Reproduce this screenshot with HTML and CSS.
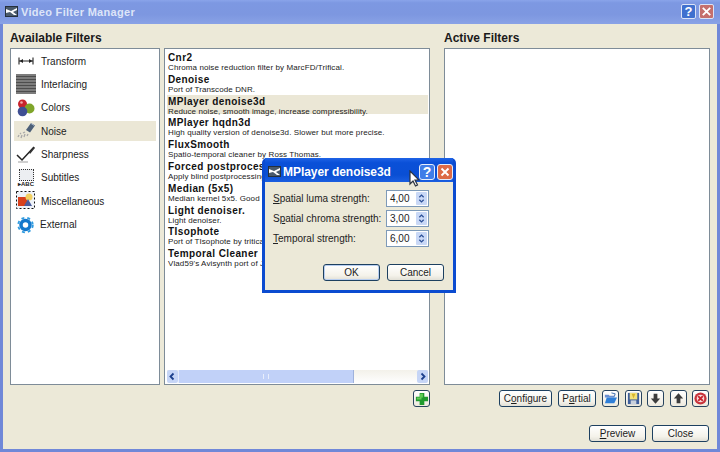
FILE: index.html
```html
<!DOCTYPE html>
<html lang="en">
<head>
<meta charset="utf-8">
<title>Video Filter Manager</title>
<link rel="stylesheet" href="styles.css">
</head>
<body>
<svg class="defs" width="0" height="0">
  <symbol id="app" viewBox="0 0 13 11">
    <rect width="13" height="11" fill="#26303c"/>
    <rect x="1" y="1" width="11" height="9" fill="#4a5a6c"/>
    <path d="M1 3l5 2 6-3v2L8 6l4 3H9L5 6 1 7z" fill="#fff"/>
  </symbol>
</svg>
<div class="window">
  <header class="titlebar">
    <svg class="app-icon"><use href="#app"/></svg>
    <span class="title">Video Filter Manager</span>
    <span class="cap cap-help">?</span>
    <span class="cap cap-close">
      <svg viewBox="0 0 14 14"><path d="M3 3l8 8M11 3l-8 8" stroke="#fff" stroke-width="2" fill="none"/></svg>
    </span>
  </header>
  <main class="panes">
    <section class="available">
      <h2 class="heading">Available Filters</h2>
      <div class="lists">
        <ul class="box cats">
          <li class="cat">
            <svg class="cat-icon" viewBox="0 0 20 20"><path d="M3 6.500v7M17 6.500v7M3 10h14" stroke="#222" stroke-width="1.100" fill="none"/><path d="M3.500 10l3.500-2v4zM16.500 10l-3.500-2v4z" fill="#222"/></svg>
            <span>Transform</span>
          </li>
          <li class="cat">
            <svg class="cat-icon" viewBox="0 0 20 20"><rect width="20" height="20" fill="#7c7c7c"/><path d="M0 2.500h20M0 5.500h20M0 8.500h20M0 11.500h20M0 14.500h20M0 17.500h20" stroke="#4d4d4d" stroke-width="1.200"/></svg>
            <span>Interlacing</span>
          </li>
          <li class="cat">
            <svg class="cat-icon" viewBox="0 0 20 20"><circle cx="6.500" cy="6" r="4.500" fill="#c8242c"/><circle cx="13.500" cy="10.500" r="5" fill="#7fa52a"/><circle cx="6.500" cy="13.500" r="4.800" fill="#3f4f93"/><circle cx="5.500" cy="4.500" r="1.300" fill="#f0a8a8"/></svg>
            <span>Colors</span>
          </li>
          <li class="cat is-selected">
            <svg class="cat-icon" viewBox="0 0 20 20"><path d="M10 9l5-7 4 2.500-5 7z" fill="#4c5f78"/><path d="M15 2.500l3 2" stroke="#9fb0c6"/><path d="M2 16l1-2M5 17l1-3M8 16l1-3M11 15l1-2M4 13l1-1M7 12l2-1" stroke="#a8a8a8" stroke-width="1.300"/></svg>
            <span>Noise</span>
          </li>
          <li class="cat">
            <svg class="cat-icon" viewBox="0 0 20 20"><path d="M1 10l5 5L18 2" stroke="#222" stroke-width="1.500" fill="none"/><path d="M13 7l5-5 1 1-5 6z" fill="#333"/><path d="M2 17h10" stroke="#cfcfcf" stroke-width="2"/></svg>
            <span>Sharpness</span>
          </li>
          <li class="cat">
            <span class="sub-icon"><span class="sub-box"></span><span class="sub-abc">▸ABC</span></span>
            <span>Subtitles</span>
          </li>
          <li class="cat">
            <svg class="cat-icon" viewBox="0 0 20 20"><rect x=".5" y=".5" width="18" height="17" fill="#eef2f8" stroke="#111" stroke-dasharray="2 2"/><rect x="2" y="6" width="9" height="9" fill="#d8401c"/><circle cx="13" cy="6" r="3.500" fill="#f2d060"/><path d="M8 15l4-7 4 7z" fill="#4a5c9c"/></svg>
            <span>Miscellaneous</span>
          </li>
          <li class="cat cat-external">
            <svg class="cat-icon" viewBox="0 0 20 20"><circle cx="9.500" cy="10" r="4.500" fill="none" stroke="#1478cc" stroke-width="3.500"/><circle cx="9.500" cy="10" r="7.300" fill="none" stroke="#2f9be0" stroke-width="1.800" stroke-dasharray="3 3"/></svg>
            <span>External</span>
          </li>
        </ul>
        <div class="box filters">
          <ul class="filter-rows">
            <li class="filter"><b>Cnr2</b><small>Chroma noise reduction filter by MarcFD/Trifical.</small></li>
            <li class="filter"><b>Denoise</b><small>Port of Transcode DNR.</small></li>
            <li class="filter is-selected"><b>MPlayer denoise3d</b><small>Reduce noise, smooth image, increase compressibility.</small></li>
            <li class="filter"><b>MPlayer hqdn3d</b><small>High quality version of denoise3d. Slower but more precise.</small></li>
            <li class="filter"><b>FluxSmooth</b><small>Spatio-temporal cleaner by Ross Thomas.</small></li>
            <li class="filter"><b>Forced postprocessing</b><small>Apply blind postprocessing</small></li>
            <li class="filter"><b>Median (5x5)</b><small>Median kernel 5x5. Good</small></li>
            <li class="filter"><b>Light denoiser.</b><small>Light denoiser.</small></li>
            <li class="filter"><b>TIsophote</b><small>Port of TIsophote by tritical</small></li>
            <li class="filter"><b>Temporal Cleaner</b><small>Vlad59's Avisynth port of J</small></li>
          </ul>
          <div class="hscroll">
            <span class="sb-btn"><svg viewBox="0 0 11 13"><path d="M6.500 3.500l-3 3 3 3" stroke="#1c3f8c" stroke-width="1.800" fill="none"/></svg></span>
            <span class="sb-thumb"><span class="sb-grip"></span></span>
            <span class="sb-track"></span>
            <span class="sb-btn"><svg viewBox="0 0 11 13"><path d="M4.500 3.500l3 3-3 3" stroke="#1c3f8c" stroke-width="1.800" fill="none"/></svg></span>
          </div>
        </div>
      </div>
      <div class="tools tools-add">
        <span class="tool"><svg viewBox="0 0 16 16"><path d="M6 2h5v4h4v5h-4v4H6v-4H2V6h4z" fill="#1f9a2e"/><path d="M6.500 3h3v4H6.500zM3 7h5v2H3z" fill="#62cc55"/></svg></span>
      </div>
    </section>
    <section class="active">
      <h2 class="heading">Active Filters</h2>
      <div class="box active-list"></div>
      <div class="tools tools-active">
        <button class="btn btn-configure">C<u>o</u>nfigure</button>
        <button class="btn btn-partial">P<u>a</u>rtial</button>
        <span class="tool"><svg viewBox="0 0 16 16"><path d="M2 4h4l1 1h5v2H2z" fill="#6b8fd0"/><path d="M2 13l2-6h11l-3 6z" fill="#2f7fd8"/><path d="M9 2l4 1-1 3" stroke="#3a6cb0" fill="none"/></svg></span>
        <span class="tool"><svg viewBox="0 0 16 16"><rect x="2" y="2" width="12" height="12" fill="#3f5f9c"/><rect x="4" y="2" width="8" height="7" fill="#f3e27a"/><path d="M6 3h4L8 8z" fill="#d8b62c"/><rect x="5" y="10" width="6" height="4" fill="#c8d0dc"/></svg></span>
        <span class="tool"><svg viewBox="0 0 16 16"><path d="M6 3h4v5h3l-5 5.500L3 8h3z" fill="#3c3c3c"/></svg></span>
        <span class="tool"><svg viewBox="0 0 16 16"><path d="M6 13h4V8h3L8 2.500 3 8h3z" fill="#3c3c3c"/></svg></span>
        <span class="tool"><svg viewBox="0 0 16 16"><circle cx="8" cy="8" r="6.500" fill="#c8343c"/><circle cx="8" cy="8" r="4" fill="#f6dcdc"/><path d="M5.500 5.500l5 5M10.500 5.500l-5 5" stroke="#c8242c" stroke-width="2"/></svg></span>
      </div>
      <div class="footer">
        <button class="btn btn-footer"><u>P</u>review</button>
        <button class="btn btn-footer">Close</button>
      </div>
    </section>
  </main>
</div>

<div class="dialog">
  <header class="dlg-title">
    <svg class="app-icon"><use href="#app"/></svg>
    <span class="dlg-name">MPlayer denoise3d</span>
    <span class="dlg-cap dlg-help">?</span>
    <span class="dlg-cap dlg-close">
      <svg viewBox="0 0 16 16"><path d="M4 4l8 8M12 4l-8 8" stroke="#fff" stroke-width="2.200" fill="none"/></svg>
    </span>
  </header>
  <div class="dlg-body">
    <div class="field">
      <label class="field-label"><u>S</u>patial luma strength:</label>
      <span class="spin"><span class="spin-value">4,00</span><span class="spin-btns"><svg viewBox="0 0 11 15"><path d="M3 6l2.500-2.500L8 6M3 9l2.500 2.500L8 9" stroke="#2b4f96" stroke-width="1.400" fill="none"/></svg></span></span>
    </div>
    <div class="field">
      <label class="field-label">S<u>p</u>atial chroma strength:</label>
      <span class="spin"><span class="spin-value">3,00</span><span class="spin-btns"><svg viewBox="0 0 11 15"><path d="M3 6l2.500-2.500L8 6M3 9l2.500 2.500L8 9" stroke="#2b4f96" stroke-width="1.400" fill="none"/></svg></span></span>
    </div>
    <div class="field">
      <label class="field-label"><u>T</u>emporal strength:</label>
      <span class="spin"><span class="spin-value">6,00</span><span class="spin-btns"><svg viewBox="0 0 11 15"><path d="M3 6l2.500-2.500L8 6M3 9l2.500 2.500L8 9" stroke="#2b4f96" stroke-width="1.400" fill="none"/></svg></span></span>
    </div>
    <div class="dlg-actions">
      <button class="btn btn-dlg btn-default">OK</button>
      <button class="btn btn-dlg">Cancel</button>
    </div>
  </div>
</div>

<svg class="cursor" viewBox="0 0 11 17"><path d="M1 1v13l3-3 2.500 5 2-1L6 10h4z" fill="#fff" stroke="#2c3440" stroke-width="1.200"/></svg>
</body>
</html>
```
FILE: styles.css
```css
* { box-sizing: border-box; }
html, body { margin: 0; padding: 0; }
body {
  position: relative;
  width: 720px;
  height: 452px;
  overflow: hidden;
  font-family: "Liberation Sans", Arial, sans-serif;
  font-size: 10px;
  color: #1c1c1c;
  background: #ece9d8;
}
ul { list-style: none; margin: 0; padding: 0; }
.defs { position: absolute; }

.window {
  display: flex;
  flex-direction: column;
  width: 720px;
  height: 452px;
  background: #ece9d8;
  border: solid #7088d8;
  border-width: 0 3px 3px;
}
.titlebar {
  display: flex;
  align-items: center;
  flex: 0 0 24px;
  margin: 0 -3px;
  padding: 0 6px 1px 5px;
  background: linear-gradient(#8aa4ea 0, #7d98e2 12%, #7d97e0 60%, #89a2e6 100%);
}
.app-icon { width: 13px; height: 11px; flex: none; }
.title {
  margin-left: 3px;
  font-size: 11px;
  font-weight: bold;
  letter-spacing: .3px;
  color: #dde5f8;
}
.cap {
  display: flex;
  align-items: center;
  justify-content: center;
  width: 15px;
  height: 15px;
  border: 1px solid #dbe3f6;
  border-radius: 2px;
  color: #fff;
  font-size: 13px;
  font-weight: bold;
}
.cap-help { margin-left: auto; background: #3f70cf; }
.cap-close { margin-left: 3px; background: #c56f6c; }
.cap-close svg { width: 13px; height: 13px; }

.panes {
  display: flex;
  gap: 14px;
  padding: 5px 7px 0;
}
.available { width: 420px; }
.active { width: 266px; }
.heading {
  margin: 0;
  height: 19px;
  font-size: 12px;
  font-weight: bold;
  line-height: 18px;
  color: #1a1a1a;
}
.lists { display: flex; gap: 4px; }
.box {
  height: 337px;
  background: #fff;
  border: 1px solid #7e8c98;
}
.cats { width: 150px; padding: 2px 3px 0; }
.filters {
  display: flex;
  flex-direction: column;
  width: 266px;
  padding: 0 1px 0 2px;
}
.active-list { width: 266px; }

.cat {
  display: flex;
  align-items: center;
  gap: 5px;
  height: 20px;
  margin-bottom: 3.400px;
  padding-left: 2px;
  font-size: 10px;
}
.cat.is-selected { background: #ebe7d6; }
.cat-icon { width: 20px; height: 20px; flex: none; }
.cat-external { gap: 4px; }
.sub-icon {
  display: flex;
  flex-direction: column;
  align-items: center;
  width: 20px;
  flex: none;
}
.sub-box {
  width: 15px;
  height: 12px;
  background: #eceef2;
  border: 1px dotted #333;
}
.sub-abc {
  font-size: 6px;
  line-height: 6px;
  font-weight: bold;
  white-space: nowrap;
}

.filter-rows { flex: 1; padding-top: 2px; }
.filter {
  display: flex;
  flex-direction: column;
  height: 19px;
  margin-bottom: 2.800px;
  padding-left: 1px;
  white-space: nowrap;
}
.filter b {
  font-size: 10px;
  line-height: 14px;
  letter-spacing: .4px;
  color: #111;
}
.filter small {
  margin-top: -2px;
  font-size: 8px;
  line-height: 9px;
  letter-spacing: .1px;
  color: #222;
}
.filter.is-selected { background: #ebe7d6; }

.hscroll {
  display: flex;
  height: 13px;
  margin-bottom: 1px;
  background: linear-gradient(#f3f1ea, #fefefe);
}
.sb-btn {
  width: 11px;
  background: #c6d5f6;
  border-radius: 2px;
  flex: none;
}
.sb-btn svg { display: block; width: 11px; height: 13px; }
.sb-thumb {
  display: flex;
  align-items: center;
  justify-content: center;
  width: 176px;
  background: #c1d1f8;
  border-right: 1px solid #9fb2dc;
  border-left: 1px solid #e6ecfb;
}
.sb-grip { width: 6px; height: 5px; border: solid #e8eefc; border-width: 0 1px; }
.sb-track { flex: 1; }

.tools {
  display: flex;
  gap: 5.500px;
  height: 17px;
  margin-top: 5px;
  justify-content: flex-end;
}
.tools-active { padding-right: 1px; }
.tool {
  display: block;
  width: 17px;
  height: 17px;
  background: linear-gradient(#fff, #eeeade);
  border: 1px solid #27435e;
  border-radius: 3px;
  flex: none;
}
.tool svg { display: block; width: 15px; height: 15px; }
.btn {
  padding: 0;
  font-family: "Liberation Sans", Arial, sans-serif;
  font-size: 10px;
  color: #1c1c1c;
  background: linear-gradient(#fff, #f4f2ea 70%, #e2e0d6);
  border: 1px solid #1d4060;
  border-radius: 3px;
}
.btn-configure { width: 53px; }
.btn-partial { width: 38px; margin-right: 1px; }
.footer {
  display: flex;
  justify-content: flex-end;
  gap: 6px;
  margin-top: 18px;
  padding-right: 1px;
}
.btn-footer { width: 57px; height: 17px; }

.dialog {
  position: absolute;
  left: 262px;
  top: 158px;
  display: flex;
  flex-direction: column;
  width: 194px;
  height: 135px;
  background: #0b4bd0;
  border: solid #0b4bd0;
  border-width: 0 3px 3px;
  border-radius: 5px 5px 0 0;
}
.dlg-title {
  display: flex;
  align-items: center;
  flex: 0 0 24px;
  padding: 3px 0 0 3px;
  background: linear-gradient(#1f63e6 0, #0a50d8 20%, #0a4fd4 70%, #1a5ee0 100%);
}
.dlg-name {
  margin-left: 2px;
  font-size: 12px;
  font-weight: bold;
  letter-spacing: -.05px;
  color: #fff;
}
.dlg-cap {
  display: flex;
  align-items: center;
  justify-content: center;
  height: 16px;
  width: 16px;
  border: 1px solid #e4ecfb;
  border-radius: 3px;
  color: #fff;
  font-size: 14px;
  font-weight: bold;
}
.dlg-help { margin-left: auto; background: #3f7de8; }
.dlg-close { margin-left: 2px; background: #dc6a46; }
.dlg-close svg { width: 14px; height: 14px; }
.dlg-body {
  flex: 1;
  padding: 8px 9px 0 8px;
  background: #ece9d8;
}
.field {
  display: flex;
  align-items: center;
  justify-content: space-between;
  width: 156px;
  height: 17px;
  margin-bottom: 3px;
}
.field-label { font-size: 10px; color: #222; }
.spin {
  display: flex;
  width: 43px;
  height: 17px;
  padding: 1px;
  background: #fff;
  border: 1px solid #7e9ab8;
}
.spin-value { flex: 1; padding-left: 2px; line-height: 14px; font-size: 10px; }
.spin-btns { width: 11px; background: #c9d8f6; border-radius: 1px; }
.spin-btns svg { display: block; width: 11px; height: 13px; }
.dlg-actions {
  display: flex;
  justify-content: flex-end;
  gap: 7px;
  margin-top: 17px;
}
.btn-dlg { width: 57px; height: 17px; }
.btn-default { box-shadow: inset 0 0 0 1px #b8cef0; }

.cursor {
  position: absolute;
  left: 409px;
  top: 170px;
  width: 11px;
  height: 17px;
}
```
